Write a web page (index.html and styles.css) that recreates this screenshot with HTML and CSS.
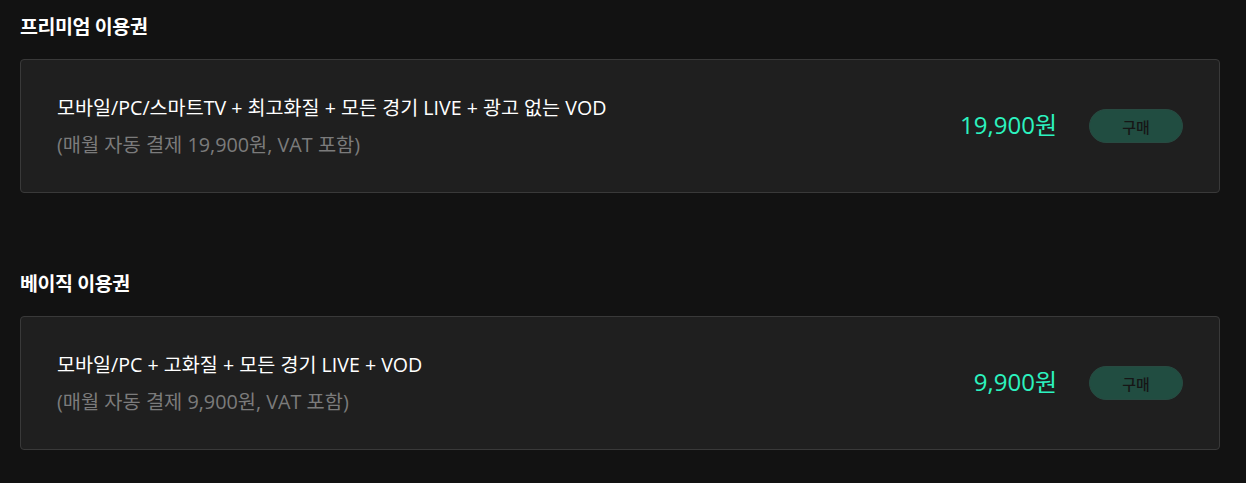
FILE: index.html
```html
<!DOCTYPE html>
<html lang="ko">
<head>
<meta charset="utf-8">
<link rel="stylesheet" href="styles.css">
</head>
<body>
<main class="page">
  <section class="plan">
    <h2 class="plan-title">프리미엄 이용권</h2>
    <div class="card">
      <div class="info">
        <p class="desc">모바일/PC/스마트TV + 최고화질 + 모든 경기 LIVE + 광고 없는 VOD</p>
        <p class="note">(매월 자동 결제 19,900원, VAT 포함)</p>
      </div>
      <div class="price">19,900원</div>
      <button class="buy">구매</button>
    </div>
  </section>
  <section class="plan">
    <h2 class="plan-title">베이직 이용권</h2>
    <div class="card">
      <div class="info">
        <p class="desc">모바일/PC + 고화질 + 모든 경기 LIVE + VOD</p>
        <p class="note">(매월 자동 결제 9,900원, VAT 포함)</p>
      </div>
      <div class="price">9,900원</div>
      <button class="buy">구매</button>
    </div>
  </section>
</main>
</body>
</html>
```
FILE: styles.css
```css
html, body {
  margin: 0;
  background: #121212;
}
body {
  font-family: "Open Sans", "Noto Sans CJK KR", sans-serif;
  color: #fff;
}
.page {
  padding: 15px 26px 0 20px;
  display: flex;
  flex-direction: column;
  gap: 79px;
}
.plan-title {
  margin: 0 0 20px;
  font-size: 19.5px;
  font-weight: 700;
  line-height: 24px;
  letter-spacing: -0.4px;
}
.card {
  box-sizing: border-box;
  height: 134px;
  background: #1f1f1f;
  border: 1px solid #393939;
  border-radius: 4px;
  padding: 0 36px;
  display: flex;
  align-items: center;
}
.info {
  flex: 1;
}
.desc {
  margin: 0;
  font-size: 19.6px;
  line-height: 26px;
}
.note {
  margin: 11px 0 0;
  font-size: 19.8px;
  line-height: 26px;
  color: #7b7b7b;
}
.price {
  font-size: 24px;
  line-height: 30px;
  padding-bottom: 3px;
  color: #2cf2bf;
  margin-right: 32px;
}
.buy {
  width: 94px;
  height: 34px;
  border-radius: 17px;
  border: 1px solid #284a41;
  background: #214d41;
  color: #161616;
  font-family: inherit;
  font-size: 15px;
  font-weight: 500;
  padding: 0;
}
```
